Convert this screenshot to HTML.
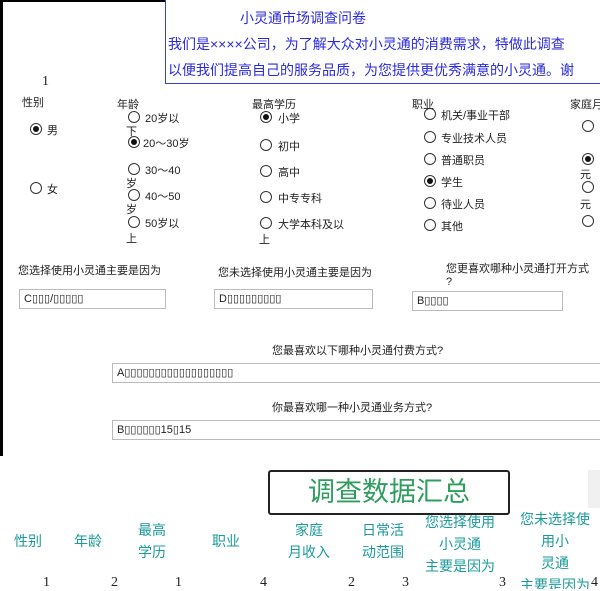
<!DOCTYPE html><html><head><meta charset="utf-8"><style>
body{margin:0;width:600px;height:589px;overflow:hidden;background:#fff;position:relative;font-family:"Liberation Sans","Noto Sans CJK SC",sans-serif;}
div,span{position:absolute;white-space:nowrap}
.t{font-size:11px;color:#222}
.r{width:10px;height:10px;border:1px solid #333;border-radius:50%;background:#fff}
.r.on::after{content:"";position:absolute;left:2px;top:2px;width:6px;height:6px;border-radius:50%;background:#111}
.in{border:1px solid #bbb;background:#fff;font-size:11px;color:#222;padding-left:4px;box-sizing:border-box;line-height:18px}
.h{font-size:14px;color:#1a9a9a;text-align:center;line-height:22px}
.n{font-size:14px;color:#222;font-family:"Liberation Serif",serif}
</style></head><body>
<div style="left:0;top:0;width:3px;height:456px;background:#000"></div>
<div style="left:0;top:0;width:166px;height:2px;background:#000"></div>
<div style="left:165px;top:0;width:440px;height:84px;border:1px solid #3344cc;border-top:none;box-sizing:border-box"></div>
<div style="left:240px;top:8px;font-size:14px;color:#2a2ad8">小灵通市场调查问卷</div>
<div style="left:168px;top:34px;font-size:14px;color:#2a2ad8">我们是××××公司，为了解大众对小灵通的消费需求，特做此调查</div>
<div style="left:168px;top:60px;font-size:14px;color:#2a2ad8">以便我们提高自己的服务品质，为您提供更优秀满意的小灵通。谢</div>
<div class="n" style="left:42px;top:74px">1</div>
<div class="t" style="left:22px;top:94px">性别</div>
<span class="r on" style="left:30px;top:123px"></span><div class="t" style="left:47px;top:122px">男</div>
<span class="r" style="left:30px;top:182px"></span><div class="t" style="left:47px;top:181px">女</div>
<div class="t" style="left:117px;top:96px">年龄</div>
<span class="r" style="left:128px;top:111px"></span><div class="t" style="left:145px;top:110px">20岁以</div><div class="t" style="left:126px;top:123px">下</div>
<span class="r on" style="left:128px;top:136px"></span><div class="t" style="left:143px;top:135px">20～30岁</div>
<span class="r" style="left:128px;top:163px"></span><div class="t" style="left:145px;top:162px">30～40</div><div class="t" style="left:126px;top:175px">岁</div>
<span class="r" style="left:128px;top:189px"></span><div class="t" style="left:145px;top:188px">40～50</div><div class="t" style="left:126px;top:201px">岁</div>
<span class="r" style="left:128px;top:216px"></span><div class="t" style="left:145px;top:215px">50岁以</div><div class="t" style="left:126px;top:230px">上</div>
<div class="t" style="left:252px;top:96px">最高学历</div>
<span class="r on" style="left:260px;top:111px"></span><div class="t" style="left:278px;top:110px">小学</div>
<span class="r" style="left:260px;top:139px"></span><div class="t" style="left:278px;top:138px">初中</div>
<span class="r" style="left:260px;top:165px"></span><div class="t" style="left:278px;top:164px">高中</div>
<span class="r" style="left:260px;top:191px"></span><div class="t" style="left:278px;top:190px">中专专科</div>
<span class="r" style="left:260px;top:217px"></span><div class="t" style="left:278px;top:216px">大学本科及以</div><div class="t" style="left:259px;top:231px">上</div>
<div class="t" style="left:412px;top:96px">职业</div>
<span class="r" style="left:424px;top:108px"></span><div class="t" style="left:441px;top:107px">机关/事业干部</div>
<span class="r" style="left:424px;top:131px"></span><div class="t" style="left:441px;top:130px">专业技术人员</div>
<span class="r" style="left:424px;top:153px"></span><div class="t" style="left:441px;top:152px">普通职员</div>
<span class="r on" style="left:424px;top:175px"></span><div class="t" style="left:441px;top:174px">学生</div>
<span class="r" style="left:424px;top:197px"></span><div class="t" style="left:441px;top:196px">待业人员</div>
<span class="r" style="left:424px;top:219px"></span><div class="t" style="left:441px;top:218px">其他</div>
<div class="t" style="left:570px;top:96px">家庭月</div>
<span class="r" style="left:582px;top:120px"></span>
<span class="r on" style="left:582px;top:153px"></span><div class="t" style="left:580px;top:166px">元</div>
<span class="r" style="left:582px;top:181px"></span><div class="t" style="left:580px;top:196px">元</div>
<span class="r" style="left:582px;top:215px"></span>
<div class="t" style="left:18px;top:262px">您选择使用小灵通主要是因为</div>
<div class="t" style="left:218px;top:264px">您未选择使用小灵通主要是因为</div>
<div class="t" style="left:446px;top:260px">您更喜欢哪种小灵通打开方式</div>
<div class="t" style="left:446px;top:276px">?</div>
<div class="in" style="left:19px;top:289px;width:147px;height:20px">C▯▯▯/▯▯▯▯▯</div>
<div class="in" style="left:214px;top:289px;width:159px;height:20px">D▯▯▯▯▯▯▯▯▯</div>
<div class="in" style="left:412px;top:291px;width:151px;height:20px">B▯▯▯▯</div>
<div class="t" style="left:272px;top:342px">您最喜欢以下哪种小灵通付费方式?</div>
<div class="in" style="left:112px;top:363px;width:500px;height:20px">A▯▯▯▯▯▯▯▯▯▯▯▯▯▯▯▯▯▯</div>
<div class="t" style="left:272px;top:399px">你最喜欢哪一种小灵通业务方式?</div>
<div class="in" style="left:112px;top:420px;width:500px;height:20px">B▯▯▯▯▯▯15▯15</div>
<div style="left:268px;top:470px;width:242px;height:45px;border:2px solid #222;border-radius:3px;box-sizing:border-box;text-align:center;font-size:27px;color:#2e9e5e;line-height:40px">调查数据汇总</div>
<div style="left:588px;top:470px;width:12px;height:38px;background:#f0f0f0"></div>
<div class="h" style="left:8px;top:530px;width:40px">性别</div>
<div class="h" style="left:68px;top:530px;width:40px">年龄</div>
<div class="h" style="left:130px;top:519px;width:44px">最高<br>学历</div>
<div class="h" style="left:206px;top:530px;width:40px">职业</div>
<div class="h" style="left:284px;top:519px;width:50px">家庭<br>月收入</div>
<div class="h" style="left:358px;top:519px;width:50px">日常活<br>动范围</div>
<div class="h" style="left:418px;top:511px;width:84px">您选择使用<br>小灵通<br>主要是因为</div>
<div class="h" style="left:510px;top:508px;width:90px;height:81px;overflow:hidden">您未选择使<br>用小<br>灵通<br>主要是因为</div>
<div class="n" style="left:43px;top:575px">1</div>
<div class="n" style="left:111px;top:575px">2</div>
<div class="n" style="left:175px;top:575px">1</div>
<div class="n" style="left:260px;top:575px">4</div>
<div class="n" style="left:348px;top:575px">2</div>
<div class="n" style="left:402px;top:575px">3</div>
<div class="n" style="left:499px;top:575px">3</div>
<div class="n" style="left:591px;top:575px">4</div>
</body></html>
